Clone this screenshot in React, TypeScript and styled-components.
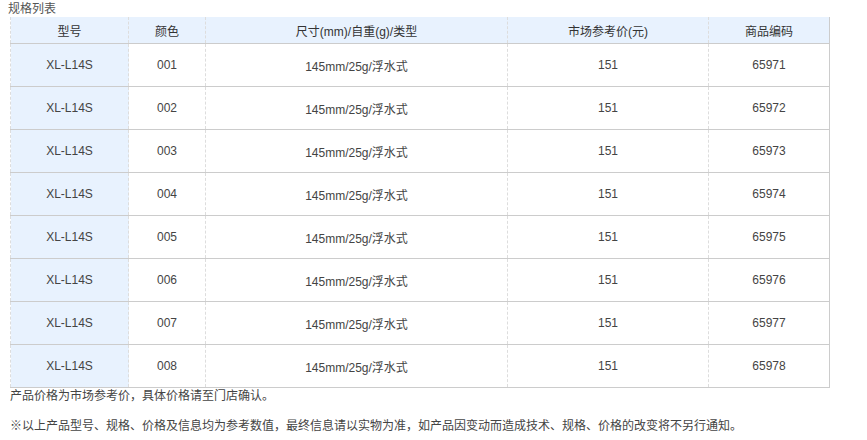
import React from "react";
import styled, { createGlobalStyle } from "styled-components";

const G = createGlobalStyle`
  body { margin: 0; background: #fff; font-family: Arial, "Liberation Sans", "Noto Sans CJK SC", sans-serif; font-size: 12px; color: #333; }
`;
const Wrap = styled.div`padding: 1px 0 0 10px; width: 820px;`;
const Title = styled.div`line-height: 16px; height: 16px; font-size: 12px; color: #555; margin-left: -2px;`;
const Table = styled.table`
  width: 819px; border-collapse: collapse; table-layout: fixed;
  border-bottom: 1px solid #ccc; border-right: 1px solid #ccc;
`;
const Th = styled.th`
  background: #e8f2fe; font-weight: normal; height: 26px; padding: 0; text-align: center;
  border-left: 1px dashed #ddd; border-bottom: 1px solid #ccc; color: #333;
`;
const Td = styled.td<{ $first?: boolean }>`
  height: 42px; padding: 0; text-align: center; color: #444;
  background: ${p => (p.$first ? "#e8f2fe" : "#fff")};
  border-left: 1px dashed #ddd; border-bottom: 1px solid #ccc;
`;
const Note = styled.p`margin: 0; line-height: 16px; color: #444;`;
const Note2 = styled(Note)`margin-top: 14px;`;

const widths = [118, 77, 302, 201, 121];
export default function App() {
  return (
    <Wrap>
      <G />
      <Title>规格列表</Title>
      <Table>
        <colgroup>{widths.map((w, i) => <col key={i} style={{ width: w }} />)}</colgroup>
        <thead><tr><Th>型号</Th><Th>颜色</Th><Th>尺寸(mm)/自重(g)/类型</Th><Th>市场参考价(元)</Th><Th>商品编码</Th></tr></thead>
        <tbody>
          {Array.from({ length: 8 }, (_, i) => (
            <tr key={i}>
              <Td $first>XL-L14S</Td><Td>00{i + 1}</Td><Td>145mm/25g/浮水式</Td><Td>151</Td><Td>{65971 + i}</Td>
            </tr>
          ))}
        </tbody>
      </Table>
      <Note>产品价格为市场参考价，具体价格请至门店确认。</Note>
      <Note2>※以上产品型号、规格、价格及信息均为参考数值，最终信息请以实物为准，如产品因变动而造成技术、规格、价格的改变将不另行通知。</Note2>
    </Wrap>
  );
}
